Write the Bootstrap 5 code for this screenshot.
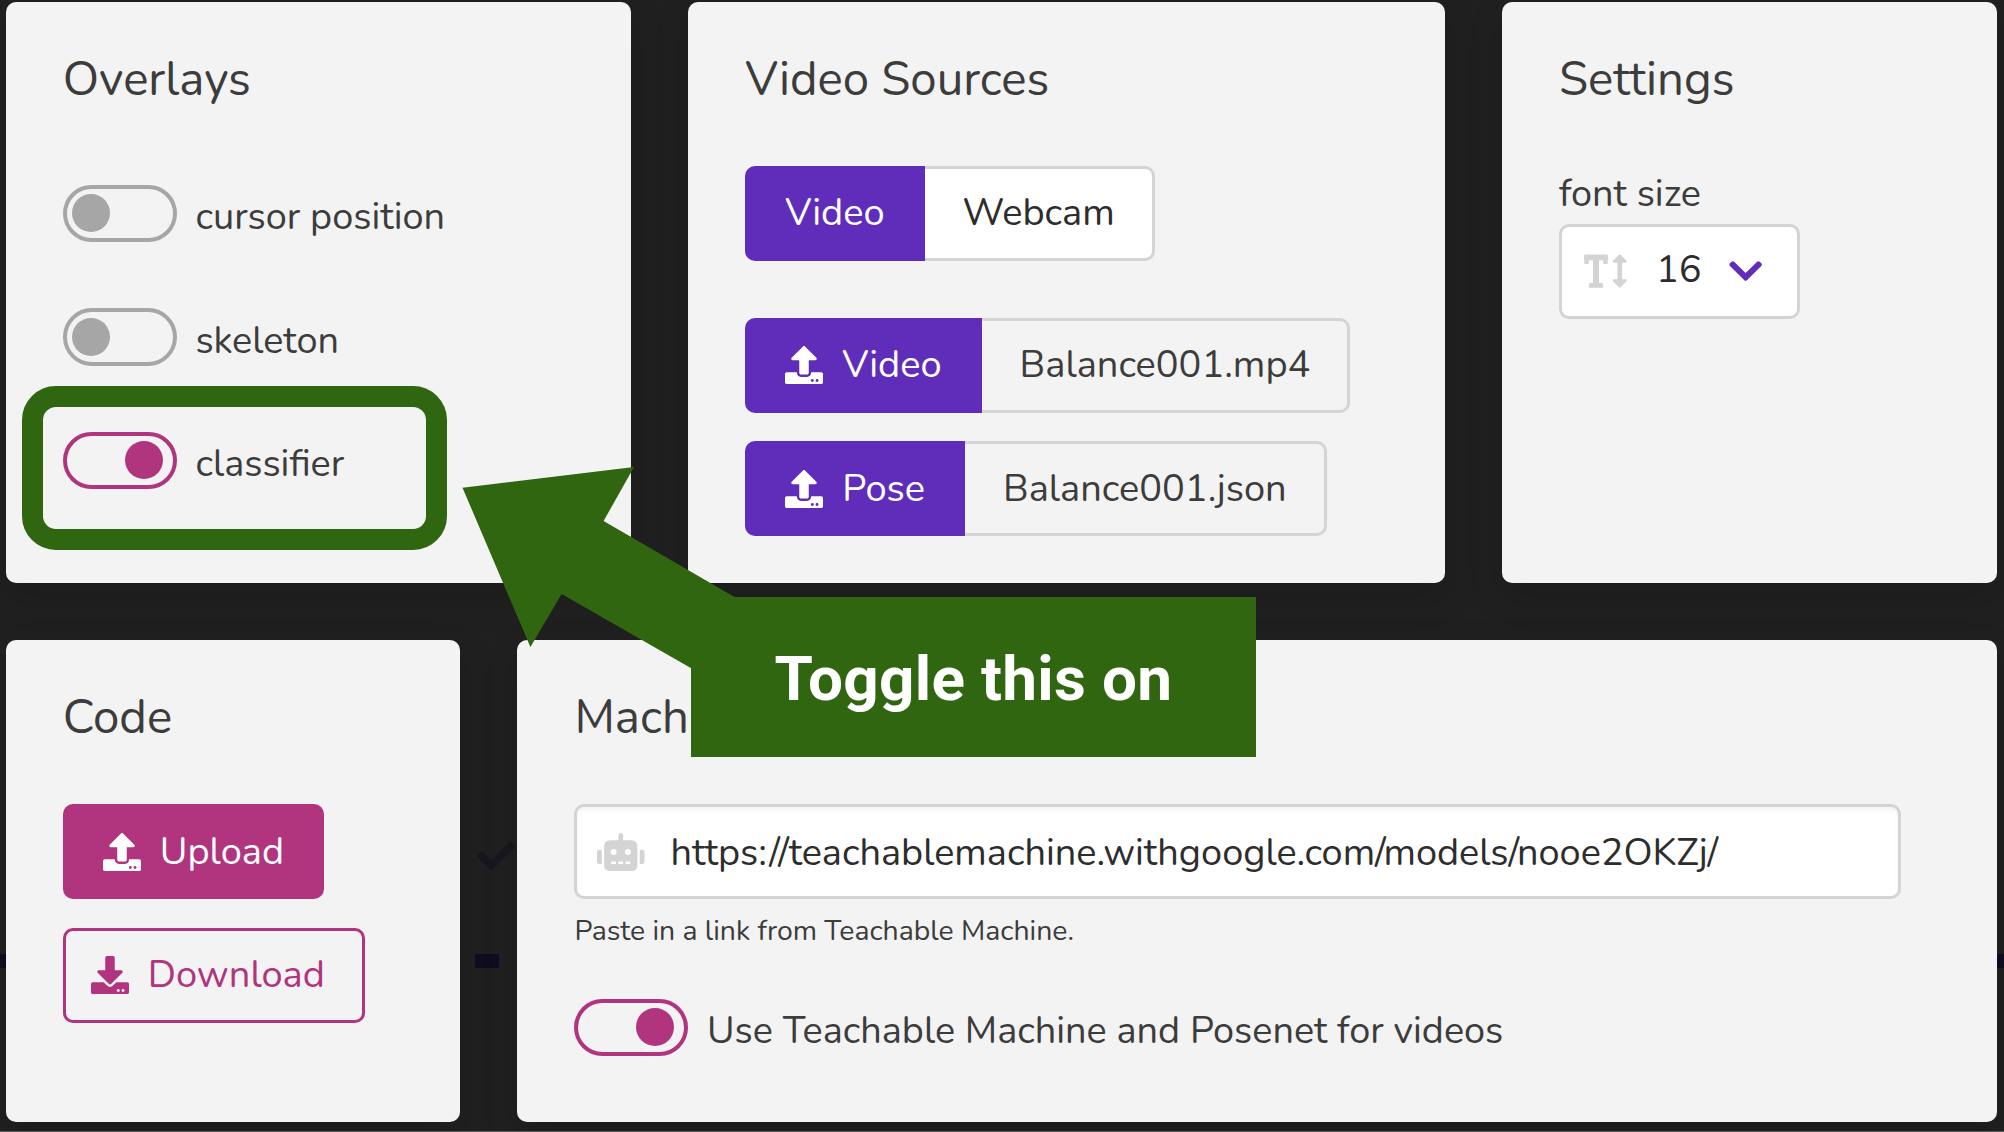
<!DOCTYPE html>
<html lang="en">
<head>
<meta charset="utf-8">
<meta name="viewport" content="width=device-width, initial-scale=1">
<title>Project panels</title>
<link href="https://cdn.jsdelivr.net/npm/bootstrap@5.3.0/dist/css/bootstrap.min.css" rel="stylesheet">
<style>
  :root { --violet: #5f2dba; --pink: #b0347e; --line: #d4d4d4; --callout: #306610; }
  body { background: #202020; color: #3c3c3c; font-family: Nunito, Lato, "Open Sans", sans-serif; font-size: 38px; line-height: 1.5; overflow: hidden; }
  .board { width: 2004px; height: 1132px; padding: 1.9px 7.4px 0 5.8px; gap: 57px; border-bottom: 1px solid #606060; }
  .board-row { gap: 57px; }
  .row-top { height: 581.6px; }
  .row-bottom { height: 481.5px; }
  .panel { background: #f3f3f3; color: inherit; border: 0; border-radius: 10px; padding: 57px; box-shadow: 0 14px 36px rgba(0,0,0,.14); }
  .panel-title { font-size: 47.35px; line-height: 40px; font-weight: 400; padding-top: 1px; margin: 0 0 65.8px; white-space: nowrap; }
  .p-overlays { width: 625.4px; }
  .p-video { width: 756.8px; }
  .p-code { width: 454.6px; }

  .toggle-row { gap: 18.6px; height: 57.5px; }
  .toggle-row + .toggle-row { margin-top: 66px; }
  .toggle-list { padding-top: 19px; }
  .toggle-row label { font-size: 37.87px; line-height: 57px; padding-top: 3.4px; white-space: nowrap; }
  .toggle { width: 114px; height: 57.5px; border: 4px solid #a6a6a6; border-radius: 29px; padding: 0 5px; flex: none; }
  .toggle::before { content: ""; width: 38px; height: 38px; border-radius: 50%; background: #a6a6a6; }
  .toggle.is-on { border-color: var(--pink); padding-right: 10px; justify-content: flex-end; }
  .toggle.is-on::before { background: var(--pink); }

  .ctl { height: 95.2px; border: 3px solid transparent; border-radius: 10px; font-size: 38px; line-height: 1; display: inline-flex; align-items: center; white-space: nowrap; padding: 0 37px; font-weight: 400; }
  .ctl svg { width: 38px; height: 38px; margin-right: 19px; flex: none; }
  .ctl-violet, .ctl-violet:hover { background: var(--violet); border-color: var(--violet); color: #fff; border-radius: 10px 0 0 10px; }
  .ctl-side { border-color: var(--line); border-left: 0; border-radius: 0 10px 10px 0; color: #3c3c3c; padding-left: 38px; }
  .ctl-plain { background: #fff; color: #2d2d2d; }
  .ctl-pink { background: var(--pink); border-color: var(--pink); color: #fff; }
  .ctl-outline { border-color: var(--pink); color: var(--pink); padding-left: 25px; }
  .source-kind { margin-bottom: 56.8px; }
  .source-files { gap: 28.4px; }
  .code-actions { gap: 28.4px; }
  svg { fill: currentColor; display: block; }

  .size-label { font-size: 37.87px; line-height: 60px; margin: -1.3px 0 -.7px; }
  .size-box { width: 240.8px; height: 95px; background: #fff; border: 3px solid var(--line); border-radius: 10px; padding: 0 0 0 22px; color: #2d2d2d; line-height: 1; }
  .size-value { margin: -2px 27px 0 29px; }
  .size-caret { color: var(--violet); }
  .faint { color: var(--line); flex: none; }
  .url-box { width: 1327px; height: 95px; background: #fff; border: 3px solid var(--line); border-radius: 10px; padding: 0 20px; gap: 25.6px; color: #2d2d2d; font-size: 37.9px; line-height: 1; box-shadow: inset 0 3px 5px rgba(0,0,0,.05); }
  .url-box span { padding-top: 2px; }
  .hint { font-size: 28.4px; line-height: 42px; margin: 10.5px 0 46.8px; }

  .behind { z-index: 0; color: #17171f; }
  .front { position: relative; z-index: 1; }
  .b-check { left: 476.5px; top: 837px; }
  .b-bar { height: 14.6px; top: 953.5px; background: #110c1f; }
  .bar-l { left: 0; width: 12px; } .bar-m { left: 474.6px; width: 24px; } .bar-r { right: 0; width: 14px; }
  .ring { z-index: 3; left: 21.5px; top: 386px; width: 425.5px; height: 163.7px; border: 21px solid var(--callout); border-radius: 34px; }
  .pointer { z-index: 3; left: 0; top: 0; color: var(--callout); pointer-events: none; }
  .callout-box { z-index: 4; left: 690.6px; top: 596.6px; width: 565.4px; height: 160.6px; background: var(--callout); color: #fff; font: 700 62px/163px Roboto, sans-serif; padding-left: 84px; white-space: nowrap; letter-spacing: .3px; }
</style>
<script src="https://cdn.jsdelivr.net/npm/bootstrap@5.3.0/dist/js/bootstrap.bundle.min.js"></script>
</head>
<body>
<svg width="0" height="0" class="position-absolute" aria-hidden="true">
  <symbol id="i-up" viewBox="0 0 512 512"><path d="M296 384h-80c-13.3 0-24-10.7-24-24V192h-87.7c-17.8 0-26.7-21.5-14.1-34.1L242.3 5.7c7.5-7.5 19.8-7.5 27.3 0l152.2 152.2c12.6 12.6 3.7 34.1-14.1 34.1H320v168c0 13.3-10.7 24-24 24zm216-8v112c0 13.3-10.7 24-24 24H24c-13.3 0-24-10.7-24-24V376c0-13.3 10.7-24 24-24h136v8c0 30.9 25.1 56 56 56h80c30.9 0 56-25.1 56-56v-8h136c13.3 0 24 10.7 24 24zm-124 88c0-11-9-20-20-20s-20 9-20 20 9 20 20 20 20-9 20-20zm64 0c0-11-9-20-20-20s-20 9-20 20 9 20 20 20 20-9 20-20z"/></symbol>
  <symbol id="i-down" viewBox="0 0 512 512"><path d="M216 0h80c13.3 0 24 10.7 24 24v168h87.7c17.8 0 26.7 21.5 14.1 34.1L269.7 378.3c-7.5 7.5-19.8 7.5-27.3 0L90.1 226.1c-12.6-12.6-3.7-34.1 14.1-34.1H192V24c0-13.3 10.7-24 24-24zm296 376v112c0 13.3-10.7 24-24 24H24c-13.3 0-24-10.7-24-24V376c0-13.3 10.7-24 24-24h146.7l49 49c20.1 20.1 52.5 20.1 72.6 0l49-49H488c13.3 0 24 10.7 24 24zm-124 88c0-11-9-20-20-20s-20 9-20 20 9 20 20 20 20-9 20-20zm64 0c0-11-9-20-20-20s-20 9-20 20 9 20 20 20 20-9 20-20z"/></symbol>
</svg>

<svg class="position-absolute behind b-check" width="38" height="38" viewBox="0 0 512 512"><path d="M173.898 439.404l-166.4-166.4c-9.997-9.997-9.997-26.206 0-36.204l36.203-36.204c9.997-9.998 26.207-9.998 36.204 0L192 312.69 432.095 72.596c9.997-9.997 26.207-9.997 36.204 0l36.203 36.204c9.997 9.997 9.997 26.206 0 36.204l-294.4 294.401c-9.998 9.997-26.207 9.997-36.204-.001z"/></svg>
<div class="position-absolute behind b-bar bar-l"></div>
<div class="position-absolute behind b-bar bar-m"></div>
<div class="position-absolute behind b-bar bar-r"></div>

<main class="board d-flex flex-column front">
  <div class="board-row row-top d-flex">
    <section class="card panel p-overlays">
      <h2 class="panel-title">Overlays</h2>
      <div class="toggle-list">
        <div class="toggle-row d-flex"><span class="toggle d-flex align-items-center"></span><label>cursor position</label></div>
        <div class="toggle-row d-flex"><span class="toggle d-flex align-items-center"></span><label>skeleton</label></div>
        <div class="toggle-row d-flex"><span class="toggle is-on d-flex align-items-center"></span><label>classifier</label></div>
      </div>
    </section>
    <section class="card panel p-video">
      <h2 class="panel-title">Video Sources</h2>
      <div class="source-kind d-flex">
        <button class="btn ctl ctl-violet">Video</button><button class="btn ctl ctl-side ctl-plain">Webcam</button>
      </div>
      <div class="source-files d-flex flex-column">
        <div class="d-flex">
          <button class="btn ctl ctl-violet"><svg><use href="#i-up"/></svg>Video</button><span class="ctl ctl-side">Balance001.mp4</span>
        </div>
        <div class="d-flex">
          <button class="btn ctl ctl-violet"><svg><use href="#i-up"/></svg>Pose</button><span class="ctl ctl-side">Balance001.json</span>
        </div>
      </div>
    </section>
    <section class="card panel flex-fill">
      <h2 class="panel-title">Settings</h2>
      <label class="size-label">font size</label>
      <div class="size-box d-flex align-items-center">
        <svg class="faint" width="43" height="38" viewBox="0 0 576 512"><path d="M304 32H16A16 16 0 0 0 0 48v96a16 16 0 0 0 16 16h32a16 16 0 0 0 16-16v-32h56v304H80a16 16 0 0 0-16 16v32a16 16 0 0 0 16 16h160a16 16 0 0 0 16-16v-32a16 16 0 0 0-16-16h-40V112h56v32a16 16 0 0 0 16 16h32a16 16 0 0 0 16-16V48a16 16 0 0 0-16-16zm256 336h-48V144h48c14.31 0 21.33-17.31 11.31-27.31l-80-80a16 16 0 0 0-22.62 0l-80 80C379.36 126 384.36 144 400 144h48v224h-48c-14.31 0-21.32 17.31-11.31 27.31l80 80a16 16 0 0 0 22.62 0l80-80C580.64 386 575.64 368 560 368z"/></svg>
        <span class="size-value">16</span>
        <svg class="size-caret" width="33.25" height="38" viewBox="0 0 448 512"><path d="M207.029 381.476L12.686 187.132c-9.373-9.373-9.373-24.569 0-33.941l22.667-22.667c9.357-9.357 24.522-9.375 33.901-.04L224 284.505l154.745-154.021c9.379-9.335 24.544-9.317 33.901.04l22.667 22.667c9.373 9.373 9.373 24.569 0 33.941L240.971 381.476c-9.373 9.372-24.569 9.372-33.942 0z"/></svg>
      </div>
    </section>
  </div>

  <div class="board-row row-bottom d-flex">
    <section class="card panel p-code">
      <h2 class="panel-title">Code</h2>
      <div class="code-actions d-flex flex-column align-items-start">
        <button class="btn ctl ctl-pink"><svg><use href="#i-up"/></svg>Upload</button>
        <button class="btn ctl ctl-outline"><svg><use href="#i-down"/></svg>Download</button>
      </div>
    </section>
    <section class="card panel flex-fill">
      <h2 class="panel-title">Mach</h2>
      <div class="url-box d-flex align-items-center">
        <svg class="faint" width="47.5" height="38" viewBox="0 0 640 512"><path d="M32,224H64V416H32A31.96166,31.96166,0,0,1,0,384V256A31.96166,31.96166,0,0,1,32,224Zm512-48V448a64.06328,64.06328,0,0,1-64,64H160a64.06328,64.06328,0,0,1-64-64V176a79.974,79.974,0,0,1,80-80H288V32a32,32,0,0,1,64,0V96H464A79.974,79.974,0,0,1,544,176ZM264,256a40,40,0,1,0-40,40A39.997,39.997,0,0,0,264,256Zm-8,128H192v32h64Zm96,0H288v32h64ZM456,256a40,40,0,1,0-40,40A39.997,39.997,0,0,0,456,256Zm-8,128H384v32h64ZM640,256V384a31.96166,31.96166,0,0,1-32,32H576V224h32A31.96166,31.96166,0,0,1,640,256Z"/></svg>
        <span>https://teachablemachine.withgoogle.com/models/nooe2OKZj/</span>
      </div>
      <p class="hint">Paste in a link from Teachable Machine.</p>
      <div class="toggle-row d-flex"><span class="toggle is-on d-flex align-items-center"></span><label>Use Teachable Machine and Posenet for videos</label></div>
    </section>
  </div>
</main>

<div class="position-absolute ring"></div>
<svg class="position-absolute pointer" width="2004" height="1132" viewBox="0 0 2004 1132"><path d="M462.5 487.7L634 467L603.6 521L734.5 597V668H690.8L561.6 594L530.4 647Z"/></svg>
<div class="position-absolute callout-box">Toggle this on</div>
</body>
</html>
